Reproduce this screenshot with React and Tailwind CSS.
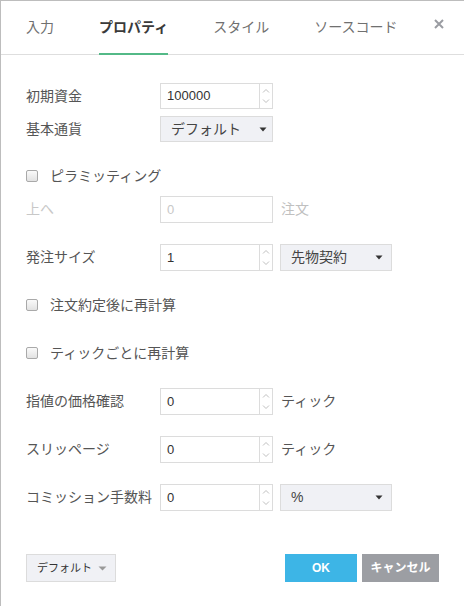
import React from 'react'

const font = { fontFamily: '"Liberation Sans", "Noto Sans CJK JP", sans-serif' }

function Spinner() {
  return (
    <div className="flex flex-col justify-between w-[13px] h-full border-l border-[#dcdcdc] py-[3px]">
      <svg width="12" height="8" viewBox="0 0 12 8" className="mx-auto">
        <path d="M3 5.5 L6 2.5 L9 5.5" fill="none" stroke="#b8b8b8" strokeWidth="0.9" />
      </svg>
      <svg width="12" height="8" viewBox="0 0 12 8" className="mx-auto">
        <path d="M3 2.5 L6 5.5 L9 2.5" fill="none" stroke="#b8b8b8" strokeWidth="0.9" />
      </svg>
    </div>
  )
}

function NumInput({ value, h = 'h-[27px]', disabled }) {
  return (
    <div className={`flex items-stretch w-[113px] ${h} border border-[#dcdcdc] bg-white`}>
      <div className={`flex-1 flex items-center pl-[6px] text-[13px] ${disabled ? 'text-[#c8c8c8]' : 'text-[#333]'}`}>
        {value}
      </div>
      {!disabled && <Spinner />}
    </div>
  )
}

function Caret({ color = '#333', w = 8 }) {
  return (
    <svg width={w} height="5" viewBox={`0 0 ${w} 5`}>
      <path d={`M0.5 0.5 L${w - 0.5} 0.5 L${w / 2} 4.5 Z`} fill={color} />
    </svg>
  )
}

function Select({ label, w = 'w-[113px]', h = 'h-[27px]', pl = 'pl-[10px]', pr = 'pr-[8px]' }) {
  return (
    <div className={`flex items-center ${w} ${h} ${pl} ${pr} border border-[#dcdcdc] bg-[#f0f1f5] text-[14px] text-[#444]`}>
      <span className="whitespace-nowrap">{label}</span>
      <span className="ml-auto flex"><Caret /></span>
    </div>
  )
}

function Checkbox({ label }) {
  return (
    <div className="flex items-center h-[20px]">
      <span className="w-[12px] h-[12px] rounded-[2px] border border-[#a9a9a9] bg-gradient-to-b from-[#fafafa] to-[#e2e2e2]" />
      <span className="ml-[12px] text-[14px] text-[#555]">{label}</span>
    </div>
  )
}

function Row({ label, children, className = '', muted }) {
  return (
    <div className={`flex items-center ${className}`}>
      <div className={`w-[134px] whitespace-nowrap text-[14px] ${muted ? 'text-[#c8c8c8]' : 'text-[#555]'}`}>{label}</div>
      {children}
    </div>
  )
}

export default function App() {
  const tabs = ['入力', 'プロパティ', 'スタイル', 'ソースコード']
  return (
    <div style={font} className="w-[464px] h-[606px] bg-white border-t border-l border-[#bdbdbd] flex flex-col overflow-hidden">
      <div className="flex items-stretch h-[54px] border-b border-[#dedede] pl-[25px] pr-[20px]">
        <div className="flex gap-[45px]">
          {tabs.map((t, i) => (
            <div
              key={t}
              className={`flex items-center pt-[1px] text-[14px] -mb-[1px] border-b-2 ${i === 1 ? 'border-[#53b987] text-[#3a3a3a] font-semibold' : 'border-transparent text-[#707070]'}`}
            >
              {t}
            </div>
          ))}
        </div>
        <div className="ml-auto flex items-center pb-[8px]">
          <svg width="10" height="10" viewBox="0 0 10 10">
            <path d="M1 1 L9 9 M9 1 L1 9" stroke="#9a9ca2" strokeWidth="2" />
          </svg>
        </div>
      </div>

      <div className="flex flex-col pl-[25px] pr-[25px]">
        <Row label="初期資金" className="mt-[28px]">
          <NumInput value="100000" h="h-[26px]" />
        </Row>
        <Row label="基本通貨" className="mt-[7px]">
          <Select label="デフォルト" h="h-[26px]" pr="pr-[5px]" />
        </Row>

        <div className="mt-[24px]">
          <Checkbox label="ピラミッティング" />
        </div>

        <Row label="上へ" muted className="mt-[10px]">
          <NumInput value="0" disabled />
          <span className="ml-[8px] text-[14px] text-[#c0c0c0]">注文</span>
        </Row>

        <Row label="発注サイズ" className="mt-[21px]">
          <NumInput value="1" />
          <div className="ml-[7px]">
            <Select label="先物契約" w="w-[112px]" />
          </div>
        </Row>

        <div className="mt-[24px]">
          <Checkbox label="注文約定後に再計算" />
        </div>
        <div className="mt-[28px]">
          <Checkbox label="ティックごとに再計算" />
        </div>

        <Row label="指値の価格確認" className="mt-[25px]">
          <NumInput value="0" />
          <span className="ml-[8px] text-[14px] text-[#555]">ティック</span>
        </Row>
        <Row label="スリッページ" className="mt-[21px]">
          <NumInput value="0" />
          <span className="ml-[8px] text-[14px] text-[#555]">ティック</span>
        </Row>
        <Row label="コミッション手数料" className="mt-[21px]">
          <NumInput value="0" />
          <div className="ml-[7px]">
            <Select label="%" w="w-[112px]" />
          </div>
        </Row>

        <div className="flex items-center mt-[43px]">
          <button className="flex items-center h-[28px] w-[90px] pl-[10px] pr-[8px] border border-[#dcdcdc] bg-[#f0f1f5] text-[11px] text-[#333] whitespace-nowrap">
            <span>デフォルト</span>
            <span className="ml-auto flex"><Caret color="#999" w={9} /></span>
          </button>
          <button className="ml-auto h-[28px] w-[72px] bg-[#3db5e6] text-white text-[12px] font-bold">OK</button>
          <button className="ml-[5px] h-[28px] w-[77px] bg-[#9c9ea3] text-white text-[12px] font-bold whitespace-nowrap">キャンセル</button>
        </div>
      </div>
    </div>
  )
}
